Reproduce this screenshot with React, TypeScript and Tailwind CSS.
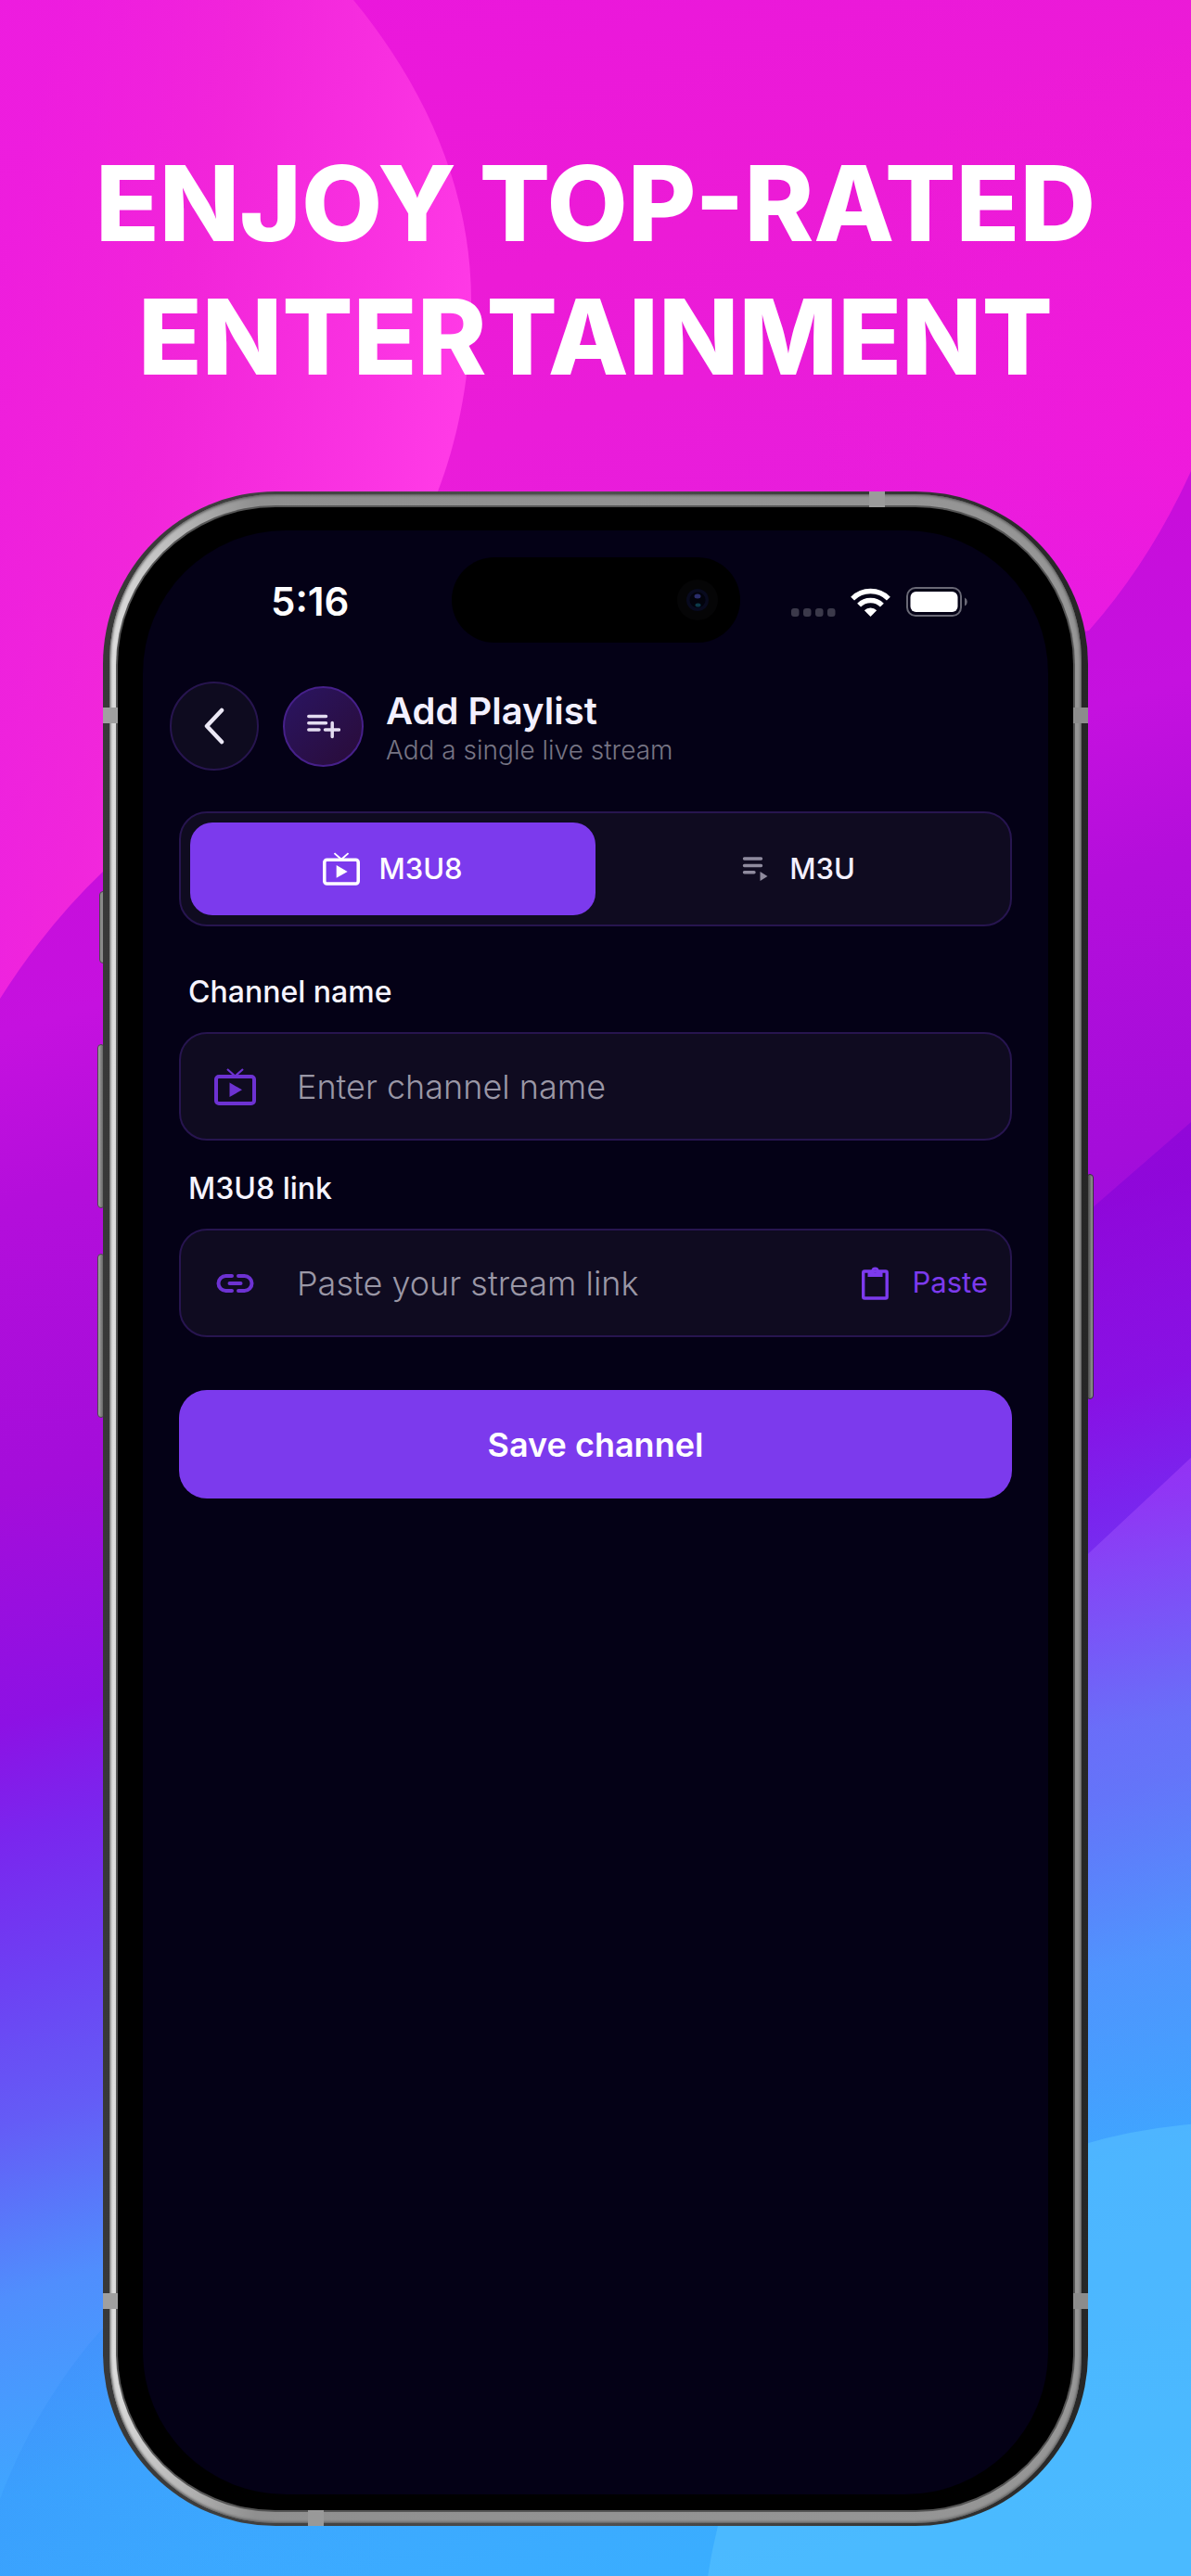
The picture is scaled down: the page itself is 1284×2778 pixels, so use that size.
import clsx from "clsx";
import { useState } from "react";
import type { ReactNode } from "react";

type Mode = "m3u8" | "m3u";

function Backdrop() {
  return (
    <svg
      aria-hidden="true"
      className="absolute inset-0 h-full w-full"
      preserveAspectRatio="none"
      viewBox="0 0 1284 2778"
    >
      <defs>
        <linearGradient id="pink" gradientUnits="userSpaceOnUse" x1="0" x2="300" y1="0" y2="1050">
          <stop offset="0" stopColor="#ea16de" />
          <stop offset="0.4" stopColor="#ec1bd6" />
          <stop offset="0.7" stopColor="#e81ddc" />
          <stop offset="1" stopColor="#e11be8" />
        </linearGradient>
        <radialGradient id="rightGlow" gradientUnits="userSpaceOnUse" cx="1284" cy="450" r="420">
          <stop offset="0" stopColor="#f618da" stopOpacity="0.6" />
          <stop offset="1" stopColor="#f618da" stopOpacity="0" />
        </radialGradient>
        <linearGradient id="bubble" gradientUnits="userSpaceOnUse" x1="0" x2="500" y1="300" y2="400">
          <stop offset="0" stopColor="#f020e0" stopOpacity="0.6" />
          <stop offset="0.4" stopColor="#f328da" stopOpacity="0.8" />
          <stop offset="1" stopColor="#ff3ae6" />
        </linearGradient>
        <linearGradient id="sweep" gradientUnits="userSpaceOnUse" x1="0" x2="853" y1="0" y2="2844">
          <stop offset="0.3" stopColor="#c80edb" />
          <stop offset="0.36" stopColor="#c511df" />
          <stop offset="0.42" stopColor="#b40edb" />
          <stop offset="0.52" stopColor="#a40dda" />
          <stop offset="0.6" stopColor="#8d11e4" />
          <stop offset="0.64" stopColor="#7a26ee" />
          <stop offset="0.69" stopColor="#6d40f3" />
          <stop offset="0.74" stopColor="#645cf6" />
          <stop offset="0.8" stopColor="#508efd" />
          <stop offset="0.87" stopColor="#3fa6ff" />
          <stop offset="1" stopColor="#38b0ff" />
        </linearGradient>
        <linearGradient id="lift" gradientUnits="userSpaceOnUse" x1="1174" x2="1300" y1="1620" y2="2300">
          <stop offset="0" stopColor="#b24cff" stopOpacity="0.4" />
          <stop offset="0.35" stopColor="#6c9cff" stopOpacity="0.4" />
          <stop offset="1" stopColor="#3ca8ff" stopOpacity="0.2" />
        </linearGradient>
        <linearGradient id="band" gradientUnits="userSpaceOnUse" x1="1174" x2="1290" y1="1300" y2="1640">
          <stop offset="0" stopColor="#7a00d8" stopOpacity="0.45" />
          <stop offset="1" stopColor="#7a20f0" stopOpacity="0.15" />
        </linearGradient>
        <linearGradient id="pool" gradientUnits="userSpaceOnUse" x1="0" x2="420" y1="2500" y2="2778">
          <stop offset="0" stopColor="#2b84f5" stopOpacity="0.3" />
          <stop offset="1" stopColor="#2fa4ff" stopOpacity="0" />
        </linearGradient>
      </defs>
      <path d="M0 0H1284V2778H0Z" fill="url(#pink)" />
      <path d="M0 0H1284V2778H0Z" fill="url(#rightGlow)" />
      <path
        d="M0 0H381C455 90 508 200 508 325C508 400 495 470 472 530L300 900L0 1100Z"
        fill="url(#bubble)"
      />
      <path d="M0 1077Q50 998 111 940L642 800L1174 680Q1240 605 1284 508V2778H0Z" fill="url(#sweep)" />
      <path d="M1100 1370L1284 1210V1572L1100 1744Z" fill="url(#band)" />
      <path d="M1100 1744L1284 1572V2778H1100Z" fill="url(#lift)" />
      <circle cx="550" cy="2900" r="587" fill="url(#pool)" />
      <circle cx="1330" cy="2862" r="573" fill="#5cc6ff" fillOpacity="0.5" />
    </svg>
  );
}

function TvIcon({ className }: { className?: string }) {
  return (
    <svg aria-hidden="true" className={className} fill="none" viewBox="0 0 45 40">
      <rect height="29" rx="3" stroke="currentColor" strokeWidth="4" width="41" x="2" y="9" />
      <path d="M14 1L22.500 8.500L31 1" stroke="currentColor" strokeWidth="2.200" />
      <path d="M16.500 15.500V31L30 23.300Z" fill="currentColor" />
    </svg>
  );
}

function PlaylistAddIcon({ className }: { className?: string }) {
  return (
    <svg aria-hidden="true" className={className} fill="none" viewBox="0 0 36 27">
      <path
        d="M1.800 2.500H20.500M1.800 9.800H20.500M1.800 17H13M19.500 17H34.500M27.200 9.500V24.500"
        stroke="currentColor"
        strokeLinecap="round"
        strokeWidth="3.500"
      />
    </svg>
  );
}

function QueueIcon({ className }: { className?: string }) {
  return (
    <svg aria-hidden="true" className={className} fill="none" viewBox="0 0 32 28">
      <path
        d="M3.500 3H21.500M3.500 10.500H21.500M3.500 17.800H14"
        stroke="currentColor"
        strokeLinecap="round"
        strokeWidth="3.400"
      />
      <path d="M20.500 17V27L28.500 22Z" fill="currentColor" />
    </svg>
  );
}

function LinkIcon({ className }: { className?: string }) {
  return (
    <svg aria-hidden="true" className={className} fill="none" viewBox="0 0 41 20">
      <path
        d="M17 2H10.500A8 8 0 0 0 10.500 18H17M24 2H30.500A8 8 0 0 1 30.500 18H24M14.500 10H26.500"
        stroke="currentColor"
        strokeLinecap="round"
        strokeWidth="4"
      />
    </svg>
  );
}

function ClipboardIcon({ className }: { className?: string }) {
  return (
    <svg aria-hidden="true" className={className} fill="none" viewBox="0 0 29 36">
      <rect height="29" rx="1.500" stroke="currentColor" strokeWidth="3.400" width="25.500" x="1.700" y="5" />
      <path
        clipRule="evenodd"
        d="M6.500 4H10.300A4.300 4.300 0 0 1 18.700 4H22.500V11H6.500ZM14.500 3.200A1.700 1.700 0 1 0 14.500 6.600A1.700 1.700 0 1 0 14.500 3.200Z"
        fill="currentColor"
        fillRule="evenodd"
      />
    </svg>
  );
}

function StatusBar() {
  return (
    <div className="grid h-[92px] grid-cols-[1fr_311px_1fr] items-center">
      <time className="pt-1 pl-[138px] text-[42px] leading-none font-semibold text-white">5:16</time>
      <div className="flex h-full items-center justify-end rounded-full bg-black pr-6">
        <svg aria-hidden="true" className="size-11" viewBox="0 0 44 44">
          <circle cx="22" cy="22" fill="#050506" r="22" />
          <circle cx="22" cy="22" fill="#080a1e" r="12" />
          <circle cx="22" cy="22" fill="#02030c" r="8.500" />
          <ellipse cx="22" cy="18" fill="#2a2d6b" rx="3.500" ry="2.500" />
          <ellipse cx="22.500" cy="27.500" fill="#0c3a4a" rx="3" ry="2" />
        </svg>
      </div>
      <div className="flex items-center justify-end pt-1 pr-[86px]">
        <svg aria-hidden="true" className="h-8 w-[191px]" fill="none" viewBox="0 0 191 32">
          <g fill="#3b394a">
            <rect height="9" rx="3" width="8.500" x="0" y="23" />
            <rect height="9" rx="3" width="8.500" x="13" y="23" />
            <rect height="9" rx="3" width="8.500" x="26" y="23" />
            <rect height="9" rx="3" width="8.500" x="39" y="23" />
          </g>
          <g transform="translate(65 1)">
            <path d="M1.100 11.600A27.500 27.500 0 0 1 39.900 11.600" stroke="#fff" strokeWidth="5.500" />
            <path d="M8.100 18.600A17.500 17.500 0 0 1 32.900 18.600" stroke="#fff" strokeWidth="5.500" />
            <path d="M20.500 31L13.800 24.300A9.500 9.500 0 0 1 27.200 24.300Z" fill="#fff" />
          </g>
          <rect height="30" rx="9" stroke="#696875" strokeWidth="2" width="58" x="125" y="1" />
          <rect fill="#fff" height="22" rx="6" width="51" x="128.500" y="5" />
          <path d="M187 11.500A5 5 0 0 1 187 20.500Z" fill="#696875" />
        </svg>
      </div>
    </div>
  );
}

type TabProps = {
  active: boolean;
  icon: ReactNode;
  label: string;
  onClick: () => void;
};

function ModeTab({ active, icon, label, onClick }: TabProps) {
  return (
    <button
      aria-selected={active}
      className={clsx(
        "flex h-[100px] flex-1 items-center justify-center gap-5 rounded-3xl text-[31px] font-medium",
        active ? "bg-[#7c3aed] text-white" : "text-[#f3f0ff]",
      )}
      onClick={onClick}
      role="tab"
      type="button"
    >
      {icon}
      {label}
    </button>
  );
}

type FieldProps = {
  id: string;
  label: string;
  placeholder: string;
  icon: ReactNode;
  value: string;
  onChange: (value: string) => void;
  action?: ReactNode;
};

function Field({ id, label, placeholder, icon, value, onChange, action }: FieldProps) {
  return (
    <div className="flex flex-col gap-[23px]">
      <label className="px-[10px] text-[32px] leading-10 font-medium text-[#f6f4ff]" htmlFor={id}>
        {label}
      </label>
      <div className="flex h-[117px] items-center rounded-[30px] border-2 border-[#27154f] bg-[#0f0b20] pr-6 pl-9">
        <span className="flex w-[45px] shrink-0 justify-center text-[#6d32d2]">{icon}</span>
        <input
          className="ml-11 min-w-0 flex-1 bg-transparent text-[36px] font-light text-white outline-none placeholder:text-[#9a97a6]"
          id={id}
          onChange={(event) => onChange(event.target.value)}
          placeholder={placeholder}
          type="text"
          value={value}
        />
        {action}
      </div>
    </div>
  );
}

function AddPlaylistScreen() {
  const [mode, setMode] = useState<Mode>("m3u8");
  const [name, setName] = useState("");
  const [link, setLink] = useState("");

  async function pasteLink() {
    const text = await navigator.clipboard.readText();
    setLink(text);
  }

  return (
    <div className="flex flex-1 flex-col rounded-[154px] bg-[#040116] pt-[29px]">
      <StatusBar />

      <header className="mt-[42px] flex items-center px-[29px]">
        <button
          aria-label="Back"
          className="flex size-24 items-center justify-center rounded-full border-2 border-[#27154f] bg-[#0e0b1f] text-[#ebe8f5]"
          type="button"
        >
          <svg aria-hidden="true" className="h-10 w-6" fill="none" viewBox="0 0 24 40">
            <path
              d="M20 3L4 20L20 37"
              stroke="currentColor"
              strokeLinecap="round"
              strokeLinejoin="round"
              strokeWidth="4.500"
            />
          </svg>
        </button>
        <div className="ml-[26px] flex size-[87px] items-center justify-center rounded-full border-2 border-[#46208a] bg-linear-to-br from-[#2a1462] to-[#290b38] text-[#e3dcf0]">
          <PlaylistAddIcon className="h-[27px] w-9" />
        </div>
        <div className="ml-6 pt-2">
          <h2 className="text-[40px] leading-[44px] font-semibold text-[#f3f0ff]">Add Playlist</h2>
          <p className="text-[28px] leading-10 font-light text-[#767484]">Add a single live stream</p>
        </div>
      </header>

      <form className="mt-11 flex flex-col px-[39px]" onSubmit={(event) => event.preventDefault()}>
        <div
          className="flex rounded-[30px] border-2 border-[#27154f] bg-[#0f0b20] p-[10px]"
          role="tablist"
        >
          <ModeTab
            active={mode === "m3u8"}
            icon={<TvIcon className="h-9 w-10" />}
            label="M3U8"
            onClick={() => setMode("m3u8")}
          />
          <ModeTab
            active={mode === "m3u"}
            icon={<QueueIcon className="h-7 w-8 text-[#8f8b9e]" />}
            label="M3U"
            onClick={() => setMode("m3u")}
          />
        </div>

        <div className="mt-[51px] flex flex-col gap-8">
          <Field
            icon={<TvIcon className="h-10 w-[45px]" />}
            id="channel-name"
            label="Channel name"
            onChange={setName}
            placeholder="Enter channel name"
            value={name}
          />
          <Field
            action={
              <button
                className="flex items-center gap-[26px] text-[31px] text-[#7c3aed]"
                onClick={pasteLink}
                type="button"
              >
                <ClipboardIcon className="h-9 w-[29px]" />
                Paste
              </button>
            }
            icon={<LinkIcon className="h-5 w-[41px]" />}
            id="stream-link"
            label="M3U8 link"
            onChange={setLink}
            placeholder="Paste your stream link"
            value={link}
          />
        </div>

        <button
          className="mt-[57px] h-[117px] rounded-[30px] bg-[#7c3aed] text-[36px] font-semibold text-white"
          type="submit"
        >
          Save channel
        </button>
      </form>
    </div>
  );
}

function PhoneFrame({ children }: { children: ReactNode }) {
  return (
    <div className="relative flex flex-1 flex-col">
      {/* side keys */}
      <span className="absolute top-[431px] -left-1 h-[78px] w-2 rounded-sm border border-[#4a4a4a] bg-[#8a8a8a]" />
      <span className="absolute top-[596px] -left-[6px] h-[177px] w-2 rounded-sm border border-[#4a4a4a] bg-linear-to-r from-[#a8a8a8] to-[#5c5c5c]" />
      <span className="absolute top-[822px] -left-[6px] h-[177px] w-2 rounded-sm border border-[#4a4a4a] bg-linear-to-r from-[#a8a8a8] to-[#5c5c5c]" />
      <span className="absolute top-[736px] -right-[6px] h-[243px] w-2 rounded-sm border border-[#333] bg-linear-to-r from-[#3c3c3c] to-[#9a9a9a]" />

      <div className="relative flex flex-1 flex-col rounded-[186px] bg-linear-to-r from-[#383838] via-[#505050] to-[#262626] px-[7px] py-[3px]">
        <div className="flex flex-1 flex-col rounded-[180px] bg-linear-to-r from-[#dedede] via-[#8f8f8f] via-15% to-[#969696] px-[7px] py-3 shadow-[inset_0_0_3px_1px_#555]">
          <div className="flex flex-1 flex-col rounded-[172px] bg-[#555] p-[2px]">
            <div className="flex flex-1 flex-col rounded-[170px] bg-black px-[27px] pt-[25px] pb-[17px]">
              {children}
            </div>
          </div>
        </div>
        {/* antenna bands */}
        <span className="absolute top-0 right-[219px] h-[17px] w-[17px] bg-[#9b9b9b]" />
        <span className="absolute bottom-0 left-[221px] h-[17px] w-[17px] bg-[#999]" />
        <span className="absolute top-[233px] left-0 h-[17px] w-4 bg-[#a0a0a0]" />
        <span className="absolute bottom-[234px] left-0 h-[17px] w-4 bg-[#a0a0a0]" />
        <span className="absolute top-[233px] right-0 h-[17px] w-4 bg-[#8c8c8c]" />
        <span className="absolute right-0 bottom-[234px] h-[17px] w-4 bg-[#8c8c8c]" />
      </div>
    </div>
  );
}

export default function App() {
  return (
    <main className="relative flex min-h-screen flex-col overflow-hidden bg-[#ea16de] px-[111px] pb-[54px] font-[Inter,sans-serif]">
      <Backdrop />
      <h1 className="relative -mx-20 pt-[147px] text-center text-[113px] leading-[144px] font-extrabold text-white">
        ENJOY TOP-RATED
        <br />
        ENTERTAINMENT
      </h1>
      <div className="relative mt-[95px] flex flex-1 flex-col">
        <PhoneFrame>
          <AddPlaylistScreen />
        </PhoneFrame>
      </div>
    </main>
  );
}
